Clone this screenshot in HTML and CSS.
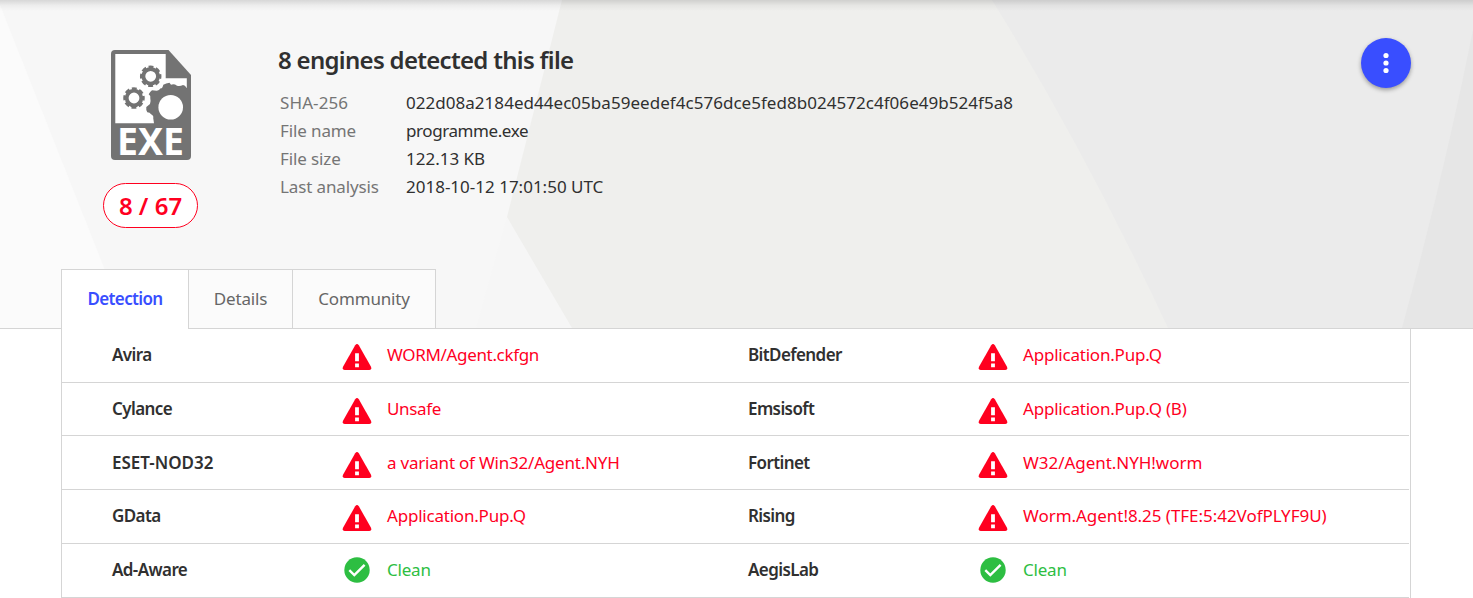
FILE: index.html
```
<!DOCTYPE html>
<html lang="en">
<head>
<meta charset="utf-8">
<title>File report</title>
<link rel="stylesheet" href="styles.css">
</head>
<body>
<svg class="defs" width="0" height="0">
  <symbol id="warn" viewBox="0 0 30 26"><path d="M13.2 1.2Q15 -1.2 16.8 1.2L29 22.8Q30 26 27.4 26H2.6Q0 26 1 22.8Z" fill="#ff001f"/><path d="M13.1 9.2h3.8v8h-3.8zM13.1 19.4h3.8v3.8h-3.8z" fill="#fff"/></symbol>
  <symbol id="ok" viewBox="0 0 30 26"><circle cx="15" cy="13" r="12.7" fill="#2dbe42"/><path d="M7.3 13.2L12.3 18.1L22.6 7.8" fill="none" stroke="#fff" stroke-width="2.4"/></symbol>
  <symbol id="gear" viewBox="-12 -12 24 24"><circle r="7.3" fill="none" stroke="#737373" stroke-width="3.8"/><circle r="9.4" fill="none" stroke="#737373" stroke-width="2.7" stroke-dasharray="4.8 2.583" stroke-dashoffset="2.4"/></symbol>
</svg>
<header class="hero">
  <svg class="facets" viewBox="0 0 1473 328" preserveAspectRatio="none">
    <path fill="#f7f7f7" d="M0 0H1473V328H0z"/>
    <path fill="#fbfbfb" d="M0 5L128 328H0z"/>
    <path fill="#f6f6f6" d="M507 217L572 328H476z"/>
    <path fill="#efefed" d="M562 0H1473V328H572L507 217z"/>
    <path fill="#ebebeb" d="M992 0H1473V328H1168Q1085 150 992 0z"/>
    <path fill="#e6e6e6" d="M1473 30V328H1402Q1444 175 1473 30z"/>
  </svg>
  <div class="summary">
    <div class="badge">
      <svg class="exe" viewBox="0 0 80 110">
        <path fill="#737373" d="M4 0H57.5L80 25V106Q80 110 76 110H4Q0 110 0 106V4Q0 0 4 0z"/>
        <path fill="#fff" d="M4.3 4H54.7V28.3H75.8V38.3Q74 35 72 35Q69 36.5 66 35.7Q63 33.5 60 34.7L58.5 32.7Q55 33 52.3 34.7Q51.5 38.5 49.7 38.3Q48 40.8 45.7 40.7L41 40.3Q39 42 37.7 44.3Q40 46 39.3 48.3Q40 51 39 54L35.3 57Q34.8 60 36.3 62.3Q39 62.5 40 64.3Q43 66 42.2 68L43 73.3H4.3z"/>
        <circle cx="59.7" cy="57.3" r="12.3" fill="#fff"/>
        <use href="#gear" x="27.7" y="14.3" width="24" height="24"/>
        <use href="#gear" x="11" y="36" width="24" height="24"/>
        <text class="ext" x="6" y="104.5" textLength="67" lengthAdjust="spacingAndGlyphs">EXE</text>
      </svg>
      <div class="ratio">8 / 67</div>
    </div>
    <div class="info">
      <h1>8 engines detected this file</h1>
      <dl>
        <dt>SHA-256</dt><dd class="hash">022d08a2184ed44ec05ba59eedef4c576dce5fed8b024572c4f06e49b524f5a8</dd>
        <dt class="tight">File name</dt><dd class="name">programme.exe</dd>
        <dt class="tight">File size</dt><dd>122.13 KB</dd>
        <dt class="tight">Last analysis</dt><dd>2018-10-12 17:01:50 UTC</dd>
      </dl>
    </div>
    <button class="menu" aria-label="Menu"><svg width="6" height="22" viewBox="0 0 6 22" fill="#fff"><circle cx="3" cy="3.5" r="2.6"/><circle cx="3" cy="11" r="2.6"/><circle cx="3" cy="18.5" r="2.6"/></svg></button>
  </div>
  <nav class="tabs"><a class="tab active">Detection</a><a class="tab details">Details</a><a class="tab community">Community</a></nav>
</header>
<main class="results">
  <div class="row"><b>Avira</b><svg><use href="#warn"/></svg><span class="bad tighter">WORM/Agent.ckfgn</span><b>BitDefender</b><svg><use href="#warn"/></svg><span class="bad">Application.Pup.Q</span></div>
  <div class="row short"><b>Cylance</b><svg><use href="#warn"/></svg><span class="bad tighter">Unsafe</span><b>Emsisoft</b><svg><use href="#warn"/></svg><span class="bad">Application.Pup.Q (B)</span></div>
  <div class="row low"><b class="caps">ESET-NOD32</b><svg><use href="#warn"/></svg><span class="bad">a variant of Win32/Agent.NYH</span><b>Fortinet</b><svg><use href="#warn"/></svg><span class="bad wide">W32/Agent.NYH!worm</span></div>
  <div class="row"><b>GData</b><svg><use href="#warn"/></svg><span class="bad">Application.Pup.Q</span><b>Rising</b><svg><use href="#warn"/></svg><span class="bad wide">Worm.Agent!8.25 (TFE:5:42VofPLYF9U)</span></div>
  <div class="row clean"><b>Ad-Aware</b><svg><use href="#ok"/></svg><span class="good">Clean</span><b>AegisLab</b><svg><use href="#ok"/></svg><span class="good">Clean</span></div>
</main>
</body>
</html>
```
FILE: styles.css
```
* { box-sizing: border-box; }
body { margin: 0; background: #fff; color: #303030; font: 400 17px/28px "Noto Sans", "Open Sans", sans-serif; overflow: hidden; }
.defs { display: block; }
.hero { position: relative; height: 329px; border-bottom: 1px solid #d5d5d5; display: flex; flex-direction: column; justify-content: space-between; }
.hero::after { content: ""; position: absolute; left: 0; right: 0; top: 0; height: 11px; background: linear-gradient(rgba(0,0,0,.13), rgba(0,0,0,.04) 50%, transparent); }
.facets { position: absolute; inset: 0; width: 100%; height: 328px; }
.summary { position: relative; display: flex; padding: 38px 62px 0 103px; }
.badge { width: 95px; padding-top: 12px; display: flex; flex-direction: column; align-items: center; gap: 23px; }
.exe { width: 80px; height: 110px; display: block; overflow: visible; }
.ext { font: 700 37px "Noto Sans", sans-serif; fill: #fff; }
.ratio { width: 95px; height: 45px; border: 1px solid #ff001f; border-radius: 23px; background: #fff; color: #ff001f; font-weight: 600; font-size: 24px; line-height: 43px; text-align: center; white-space: nowrap; }
.info { margin-left: 80px; flex: 1; }
h1 { margin: 6px 0 14px; font-size: 24px; line-height: 31px; font-weight: 600; letter-spacing: -.7px; white-space: nowrap; }
dl { margin: 0 0 0 2px; display: grid; grid-template-columns: 126px 1fr; white-space: nowrap; }
dt { color: #757575; letter-spacing: .1px; }
dt.tight { letter-spacing: -.12px; }
dd { margin: 0; }
.hash { letter-spacing: .035px; }
.name { letter-spacing: -.42px; }
.menu { width: 50px; height: 50px; padding: 0; border: 0; border-radius: 50%; background: #394eff; display: flex; align-items: center; justify-content: center; box-shadow: 0 2px 4px rgba(0,0,0,.35); }
.tabs { position: relative; display: flex; width: 375px; height: 60px; margin: 0 0 -1px 61px; border: 1px solid #d5d5d5; border-width: 1px 0 0 1px; line-height: 58px; text-align: center; }
.tab { border-right: 1px solid #d5d5d5; border-bottom: 1px solid #d5d5d5; background: #fbfbfb; color: #666; height: 59px; letter-spacing: -.15px; }
.active { width: 127px; background: #fff; color: #394eff; font-weight: 600; letter-spacing: -.65px; border-bottom: 0; }
.details { width: 104px; }
.community { width: 143px; }
.results { width: 1350px; margin-left: 61px; border: 1px solid #d5d5d5; border-width: 0 1px; padding-right: 1px; }
.row { height: 54px; display: grid; grid-template-columns: 230px 45px 361px 230px 45px 1fr; align-items: start; padding: 12px 0 0 50px; border-bottom: 1px solid #d5d5d5; white-space: nowrap; }
.short { height: 53px; }
.low { padding-top: 13px; }
.row svg { width: 30px; height: 26px; margin-top: 3px; }
.clean svg { margin-top: 1px; }
.row b { font-weight: 600; letter-spacing: -.6px; }
.row .caps { letter-spacing: 0; }
.bad { color: #ff001f; letter-spacing: -.21px; }
.tighter { letter-spacing: -.34px; }
.wide { letter-spacing: -.04px; }
.good { color: #2dbe42; letter-spacing: -.2px; }
```
